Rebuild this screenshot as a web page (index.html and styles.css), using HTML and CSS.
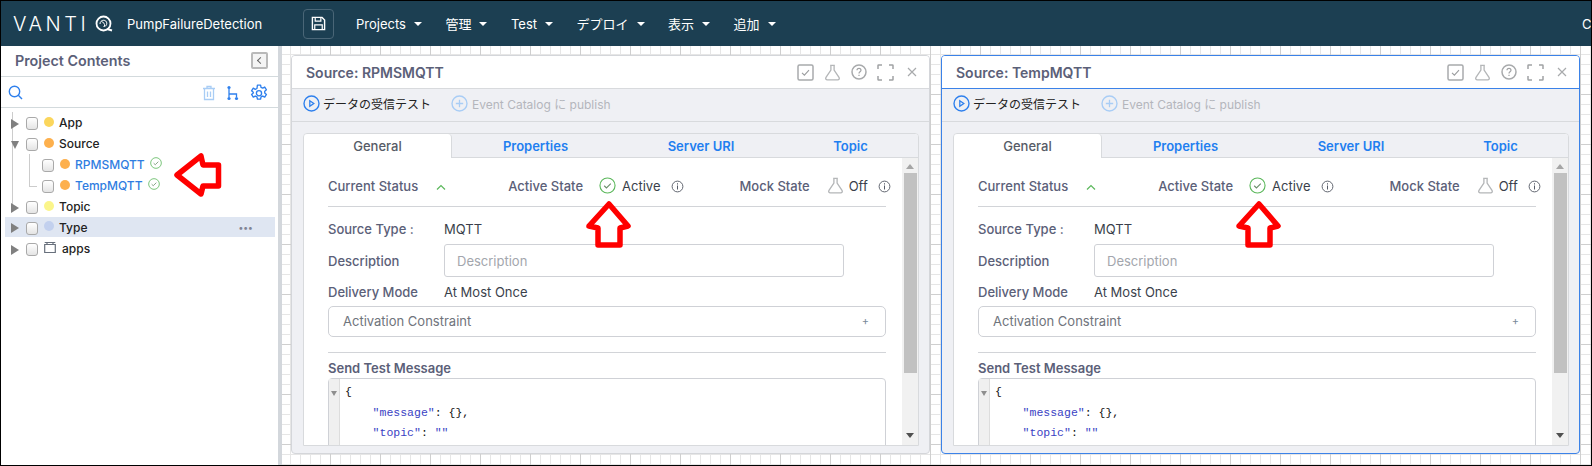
FILE: index.html
```html
<!DOCTYPE html>
<html lang="ja">
<head>
    <meta charset="UTF-8">
    <title>PumpFailureDetection</title>
    <link rel="stylesheet" href="styles.css">
</head>
<body>
<svg class="sprites" width="0" height="0">
    <symbol id="i-check" viewBox="0 0 18 18"><circle cx="9" cy="9" r="8" fill="none" stroke="#5cb85c" stroke-width="1.2"/><path d="M5.5 9.3l2.4 2.3 4.6-4.6" fill="none" stroke="#6c8f6c" stroke-width="1.2"/></symbol>
    <symbol id="i-info" viewBox="0 0 14 14"><circle cx="7" cy="7" r="5.8" fill="none" stroke="#555b66" stroke-width="1"/><path d="M7 6v4.2M7 3.6v1.2" stroke="#555b66" stroke-width="1.1"/></symbol>
    <symbol id="i-flask" viewBox="0 0 17 18"><path d="M6 1.5h5M6.8 1.5v5L1.6 14.2c-.8 1.3 0 2.6 1.4 2.6h11c1.4 0 2.2-1.3 1.4-2.6L10.2 6.5v-5" fill="none" stroke="#b4b6b8" stroke-width="1.4"/></symbol>
    <symbol id="i-play" viewBox="0 0 17 17"><circle cx="8.5" cy="8.5" r="7.5" fill="none" stroke="#2f80ed" stroke-width="1.4"/><path d="M6.8 5.8l4 2.7-4 2.7z" fill="none" stroke="#2f80ed" stroke-width="1.3"/></symbol>
    <symbol id="i-plus" viewBox="0 0 17 17"><circle cx="8.5" cy="8.5" r="7.5" fill="none" stroke="#a9cdf5" stroke-width="1.4"/><path d="M8.5 4.8v7.4M4.8 8.5h7.4" stroke="#a9cdf5" stroke-width="1.3"/></symbol>
    <symbol id="i-box" viewBox="0 0 17 17"><rect x="1" y="1" width="15" height="15" rx="1.5" fill="none" stroke="#a8aaac" stroke-width="1.5"/><path d="M5 8.8l2.4 2.4 4.6-5" fill="none" stroke="#9a9c9e" stroke-width="1.1"/></symbol>
    <symbol id="i-help" viewBox="0 0 16 16"><circle cx="8" cy="8" r="7" fill="none" stroke="#a8aaac" stroke-width="1.5"/><path d="M6 6.300c0-2.600 4-2.600 4 0 0 1.500-2 1.500-2 3.100M8 10.800v1.200" fill="none" stroke="#a0a2a4" stroke-width="1.2"/></symbol>
    <symbol id="i-full" viewBox="0 0 17 17"><path d="M1 5V1.600C1 1.200 1.200 1 1.600 1H5M12 1h3.400c.4 0 .6.2.6.6V5M16 12v3.400c0 .4-.2.6-.6.6H12M5 16H1.600c-.4 0-.6-.2-.6-.6V12" fill="none" stroke="#a0a2a4" stroke-width="1.5"/></symbol>
    <symbol id="i-close" viewBox="0 0 10 10"><path d="M1 1l8 8M9 1l-8 8" stroke="#a8aaac" stroke-width="1.2"/></symbol>
</svg>

<div class="app">
    <nav class="navbar">
        <div class="logo">VANTI<svg class="logo-q" viewBox="0 0 18 18" width="18" height="18"><circle cx="8.500" cy="8.500" r="7" fill="none" stroke="#fff" stroke-width="1.800"/><path d="M5 9c0-4 5-5 6.500-2 1 2.500-1 5-3 4.500M6.500 6.500c2 1 3.500 2 3 4.500" fill="none" stroke="#fff" stroke-width="1"/><path d="M12 14l5 1.500" stroke="#fff" stroke-width="2"/></svg></div>
        <div class="project-name">PumpFailureDetection</div>
        <button class="save-btn"><svg viewBox="0 0 16 16" width="15" height="15"><path d="M1.500 1.500h10.300l2.700 2.700v10.300h-13z" fill="none" stroke="#fff" stroke-width="1.500"/><path d="M4.500 1.500v4h6v-4M4 14.500v-5h8v5" fill="none" stroke="#fff" stroke-width="1.300"/></svg></button>
        <ul class="menu">
            <li class="caret">Projects</li>
            <li class="caret">管理</li>
            <li class="caret">Test</li>
            <li class="caret">デプロイ</li>
            <li class="caret">表示</li>
            <li class="caret">追加</li>
        </ul>
        <div class="nav-user">C</div>
    </nav>

    <div class="main">
        <aside class="sidebar">
            <div class="side-head">
                <span>Project Contents</span>
                <button class="collapse-btn"></button>
            </div>
            <div class="side-tools">
                <svg class="search-icon" viewBox="0 0 15 15" width="15" height="15"><circle cx="6.500" cy="6.500" r="5.200" fill="none" stroke="#2f80ed" stroke-width="1.400"/><path d="M10.300 10.300l3.700 3.700" stroke="#2f80ed" stroke-width="1.400"/></svg>
                <svg viewBox="0 0 14 16" width="14" height="16"><path d="M1 3.500h12M5 3.500V1.500h4v2M2.500 3.500v11h9v-11M5.500 6.500v5.500M8.500 6.500v5.500" fill="none" stroke="#a9cdf5" stroke-width="1.300"/></svg>
                <svg viewBox="0 0 14 16" width="14" height="16"><path d="M3 3.500v9M3 9h7.500v3" fill="none" stroke="#2f80ed" stroke-width="1.300"/><circle cx="3" cy="2.500" r="1.600" fill="#2f80ed"/><circle cx="3" cy="13.500" r="1.600" fill="#2f80ed"/><circle cx="10.500" cy="13.500" r="1.600" fill="#2f80ed"/></svg>
                <svg viewBox="0 0 16 16" width="18" height="18"><path d="M6.600 1h2.800l.4 2 1.500.7 1.800-1 1.500 2.400-1.500 1.300v1.600l1.500 1.300-1.500 2.400-1.800-1-1.500.7-.4 2H6.600l-.4-2-1.500-.7-1.800 1-1.500-2.400 1.500-1.300V7.400L1.400 6.100l1.500-2.400 1.800 1 1.500-.7z" fill="none" stroke="#2f80ed" stroke-width="1.200" stroke-linejoin="round"/><circle cx="8" cy="8.200" r="2.300" fill="none" stroke="#2f80ed" stroke-width="1.200"/></svg>
            </div>
            <div class="tree">
                <span class="tree-line"></span>
                <div class="row"><i class="tri"></i><i class="cb"></i><i class="dot dot-app"></i><span>App</span></div>
                <div class="row"><i class="tri tri-open"></i><i class="cb"></i><i class="dot dot-source"></i><span>Source</span></div>
                <div class="children">
                    <div class="row child"><i class="cb"></i><i class="dot dot-source"></i><a>RPMSMQTT</a><svg class="row-check"><use href="#i-check"/></svg></div>
                    <div class="row child"><i class="cb"></i><i class="dot dot-source"></i><a>TempMQTT</a><svg class="row-check"><use href="#i-check"/></svg></div>
                </div>
                <div class="row"><i class="tri"></i><i class="cb"></i><i class="dot dot-topic"></i><span>Topic</span></div>
                <div class="row row-on"><i class="tri"></i><i class="cb"></i><i class="dot dot-type"></i><span>Type</span><b class="more">•••</b></div>
                <div class="row"><i class="tri"></i><i class="cb"></i><svg class="cal" viewBox="0 0 12 11" width="12" height="11"><path d="M.7 2.500h10.600v8H.7zM.7.500h10.600" fill="none" stroke="#68707c" stroke-width="1.200"/><path d="M3 0v2.500M9 0v2.500" stroke="#68707c" stroke-width="1.200"/></svg><span>apps</span></div>
            </div>
        </aside>

        <section class="canvas">
            <div class="win win-one">
                <header class="win-head">
                    <h2>Source: RPMSMQTT</h2>
                    <div class="win-icons">
                        <svg class="w17"><use href="#i-box"/></svg>
                        <svg class="w17"><use href="#i-flask"/></svg>
                        <svg class="w16"><use href="#i-help"/></svg>
                        <svg class="w17"><use href="#i-full"/></svg>
                        <svg class="w10"><use href="#i-close"/></svg>
                    </div>
                </header>
                <div class="win-tools">
                    <svg class="w17"><use href="#i-play"/></svg><span class="tool-text">データの受信テスト</span>
                    <svg class="w17 tool-gap"><use href="#i-plus"/></svg><span class="tool-off">Event Catalog に publish</span>
                </div>
                <div class="win-body">
                    <div class="card">
                        <ul class="tabs">
                            <li class="tab-on">General</li>
                            <li>Properties</li>
                            <li>Server URI</li>
                            <li>Topic</li>
                        </ul>
                        <div class="pane">
                            <div class="pane-inner">
                                <div class="status">
                                    <span class="lbl">Current Status</span>
                                    <svg class="chev" viewBox="0 0 10 6" width="10" height="6"><path d="M1 5.500l4-4 4 4" fill="none" stroke="#5cb85c" stroke-width="1.200"/></svg>
                                    <span class="lbl st-active">Active State</span>
                                    <svg class="w17 st-check"><use href="#i-check"/></svg>
                                    <span class="st-val">Active</span>
                                    <svg class="w13 st-info"><use href="#i-info"/></svg>
                                    <span class="lbl st-mock">Mock State</span>
                                    <svg class="w17 st-flask"><use href="#i-flask"/></svg>
                                    <span class="st-val st-off">Off</span>
                                    <svg class="w13 st-info2"><use href="#i-info"/></svg>
                                </div>
                                <div class="form-row f-type"><span class="lbl">Source Type :</span><span>MQTT</span></div>
                                <div class="form-row f-desc"><span class="lbl">Description</span><div class="input">Description</div></div>
                                <div class="form-row f-mode"><span class="lbl">Delivery Mode</span><span>At Most Once</span></div>
                                <div class="constraint"><span>Activation Constraint</span><b>+</b></div>
                                <h3 class="send">Send Test Message</h3>
                                <div class="editor">
                                    <div class="gutter"><i></i></div>
                                    <div class="code">
                                        <div>{</div>
                                        <div class="indent"><em>"message"</em>: {},</div>
                                        <div class="indent"><em>"topic"</em>: <em>""</em></div>
                                        <div>}</div>
                                    </div>
                                </div>
                            </div>
                            <div class="scrollbar"><i class="sb-up"></i><i class="sb-thumb"></i><i class="sb-down"></i></div>
                        </div>
                    </div>
                </div>
            </div>

            <div class="win win-two win-focus">
                <header class="win-head">
                    <h2>Source: TempMQTT</h2>
                    <div class="win-icons">
                        <svg class="w17"><use href="#i-box"/></svg>
                        <svg class="w17"><use href="#i-flask"/></svg>
                        <svg class="w16"><use href="#i-help"/></svg>
                        <svg class="w17"><use href="#i-full"/></svg>
                        <svg class="w10"><use href="#i-close"/></svg>
                    </div>
                </header>
                <div class="win-tools">
                    <svg class="w17"><use href="#i-play"/></svg><span class="tool-text">データの受信テスト</span>
                    <svg class="w17 tool-gap"><use href="#i-plus"/></svg><span class="tool-off">Event Catalog に publish</span>
                </div>
                <div class="win-body">
                    <div class="card">
                        <ul class="tabs">
                            <li class="tab-on">General</li>
                            <li>Properties</li>
                            <li>Server URI</li>
                            <li>Topic</li>
                        </ul>
                        <div class="pane">
                            <div class="pane-inner">
                                <div class="status">
                                    <span class="lbl">Current Status</span>
                                    <svg class="chev" viewBox="0 0 10 6" width="10" height="6"><path d="M1 5.500l4-4 4 4" fill="none" stroke="#5cb85c" stroke-width="1.200"/></svg>
                                    <span class="lbl st-active">Active State</span>
                                    <svg class="w17 st-check"><use href="#i-check"/></svg>
                                    <span class="st-val">Active</span>
                                    <svg class="w13 st-info"><use href="#i-info"/></svg>
                                    <span class="lbl st-mock">Mock State</span>
                                    <svg class="w17 st-flask"><use href="#i-flask"/></svg>
                                    <span class="st-val st-off">Off</span>
                                    <svg class="w13 st-info2"><use href="#i-info"/></svg>
                                </div>
                                <div class="form-row f-type"><span class="lbl">Source Type :</span><span>MQTT</span></div>
                                <div class="form-row f-desc"><span class="lbl">Description</span><div class="input">Description</div></div>
                                <div class="form-row f-mode"><span class="lbl">Delivery Mode</span><span>At Most Once</span></div>
                                <div class="constraint"><span>Activation Constraint</span><b>+</b></div>
                                <h3 class="send">Send Test Message</h3>
                                <div class="editor">
                                    <div class="gutter"><i></i></div>
                                    <div class="code">
                                        <div>{</div>
                                        <div class="indent"><em>"message"</em>: {},</div>
                                        <div class="indent"><em>"topic"</em>: <em>""</em></div>
                                        <div>}</div>
                                    </div>
                                </div>
                            </div>
                            <div class="scrollbar"><i class="sb-up"></i><i class="sb-thumb"></i><i class="sb-down"></i></div>
                        </div>
                    </div>
                </div>
            </div>
        </section>
    </div>

    <!-- red arrows lying over the screenshot -->
    <svg class="arrow arrow-left" viewBox="0 0 50 46" width="50" height="46"><path d="M4 23L28 4l2 9h15.500v21H30l-2 8z" fill="#fff" stroke="#f00" stroke-width="5.500" stroke-linejoin="round"/></svg>
    <svg class="arrow arrow-up arrow-up-one" viewBox="0 0 48 50" width="48" height="50"><path d="M24 5l19 22-8 2v17H13V29l-9-2z" fill="#fff" stroke="#f00" stroke-width="5.500" stroke-linejoin="round"/></svg>
    <svg class="arrow arrow-up arrow-up-two" viewBox="0 0 48 50" width="48" height="50"><path d="M24 5l19 22-8 2v17H13V29l-9-2z" fill="#fff" stroke="#f00" stroke-width="5.500" stroke-linejoin="round"/></svg>
</div>
</body>
</html>
```

FILE: styles.css
```css
* {
    padding: 0;
    margin: 0;
    list-style: none;
    box-sizing: border-box;
}

body {
    font-family: Inter, "Noto Sans CJK JP", sans-serif;
    font-size: 13px;
    color: #3a3f4b;
    overflow: hidden;
    background: #fff;
}

.sprites {
    position: absolute;
}

.app {
    position: relative;
    width: 1592px;
    height: 466px;
    border: 1px solid #000;
    display: flex;
    flex-direction: column;
    overflow: hidden;
}

/* navbar */
.navbar {
    height: 45px;
    flex: none;
    background: #1c3f52;
    color: #fff;
    display: flex;
    align-items: center;
    padding-left: 12px;
    position: relative;
}

.logo {
    font-size: 20px;
    font-weight: 300;
    letter-spacing: 3.5px;
    width: 114px;
    display: flex;
    align-items: center;
}

.logo-q {
    margin-left: 6px;
}

.project-name {
    width: 176px;
    font-size: 13px;
}

.save-btn {
    width: 31px;
    height: 30px;
    background: transparent;
    border: 1px solid #4a6677;
    border-radius: 4px;
    display: flex;
    align-items: center;
    justify-content: center;
}

.menu {
    display: flex;
    gap: 23.5px;
    margin-left: 22px;
}

.caret {
    display: flex;
    align-items: center;
}

.caret::after {
    content: "";
    margin-left: 8px;
    border-top: 4px solid #fff;
    border-left: 4px solid transparent;
    border-right: 4px solid transparent;
}

.nav-user {
    position: absolute;
    left: 1581px;
    top: 15px;
}

/* sidebar */
.main {
    flex: 1;
    display: flex;
    min-height: 0;
}

.sidebar {
    width: 281px;
    flex: none;
    background: #fff;
    border-right: 4px solid #d3d7dc;
}

.side-head {
    height: 31px;
    border-bottom: 1px solid #d3dadd;
    display: flex;
    align-items: center;
    justify-content: space-between;
    padding: 0 10px 2px 14px;
    font-size: 14.3px;
    font-weight: 600;
    color: #5b6078;
}

.collapse-btn {
    width: 17px;
    height: 17px;
    background: #f4f4f4;
    border: 2px solid #b9b9b9;
    border-radius: 2px;
    position: relative;
}

.collapse-btn::after {
    content: "";
    position: absolute;
    left: 5px;
    top: 4px;
    width: 4px;
    height: 4px;
    border-left: 1px solid #666;
    border-bottom: 1px solid #666;
    transform: rotate(45deg);
}

.side-tools {
    height: 31px;
    border-bottom: 1px solid #d3dadd;
    display: flex;
    align-items: center;
    gap: 10px;
    padding: 1px 10px 0 7px;
}

.search-icon {
    margin-right: auto;
}

.tree {
    position: relative;
    padding-top: 4px;
}

.tree-line {
    position: absolute;
    left: 11px;
    top: 4px;
    height: 100px;
    border-left: 1px solid #ccc;
}

.row {
    position: relative;
    height: 21px;
    margin-left: 4px;
    width: 270px;
    padding-left: 6px;
    display: flex;
    align-items: center;
    font-size: 12px;
    font-weight: 500;
    color: #222;
}

.row i {
    flex: none;
}

.tri {
    width: 8px;
    height: 10px;
    margin-top: 2px;
    margin-right: 7px;
    border-left: 8px solid #808080;
    border-top: 5px solid transparent;
    border-bottom: 5px solid transparent;
}

.tri-open {
    border-left: 4px solid transparent;
    border-right: 4px solid transparent;
    border-top: 8px solid #808080;
    border-bottom: 0;
    height: 8px;
}

.cb {
    width: 12px;
    height: 13px;
    margin-top: 2px;
    margin-right: 6px;
    border: 1px solid #a9a9a9;
    border-radius: 3px;
    background: linear-gradient(#fff, #e4e4e4);
}

.dot {
    width: 10px;
    height: 10px;
    border-radius: 50%;
    margin-top: -2px;
    margin-right: 5px;
}

.dot-app { background: #fbd65c; }
.dot-source { background: #fdb04d; }
.dot-topic { background: #fbf58a; }
.dot-type { background: #c2d0ee; }

.children {
    position: relative;
}

.children::before {
    content: "";
    position: absolute;
    left: 28px;
    top: 0;
    width: 7px;
    height: 32px;
    border-left: 1px solid #ccc;
    border-bottom: 1px solid #ccc;
}

.child {
    padding-left: 37px;
}

.child a {
    color: #2f7de1;
}

.row-check {
    width: 12px;
    height: 12px;
    margin-left: 5px;
    margin-top: -3px;
}

.row-on {
    background: #dfe6f2;
    height: 20px;
    margin-bottom: 1px;
}

.more {
    margin-left: auto;
    margin-right: 22px;
    font-size: 9px;
    letter-spacing: .5px;
    color: #808494;
}

.cal {
    margin-top: -3px;
    margin-right: 6px;
}

/* canvas with grid */
.canvas {
    flex: 1;
    position: relative;
    background-color: #fff;
    background-image:
        linear-gradient(#cfcfcf 1px, transparent 1px),
        linear-gradient(90deg, #cfcfcf 1px, transparent 1px),
        linear-gradient(#e6e6e6 1px, transparent 1px),
        linear-gradient(90deg, #e6e6e6 1px, transparent 1px);
    background-size: 50px 50px, 50px 50px, 10px 10px, 10px 10px;
    background-position: 0 -2px, -2px 0, 0 -2px, -2px 0;
}

.win {
    position: absolute;
    top: 9px;
    width: 639px;
    height: 399px;
    background: #eff0f4;
    border: 1px solid #d4d6da;
    border-radius: 4px;
    overflow: hidden;
    display: flex;
    flex-direction: column;
}

.win-one {
    left: 9px;
}

.win-two {
    left: 659px;
}

.win-focus {
    border-color: #3b82e8;
}

.win-head {
    height: 33px;
    flex: none;
    background: #fff;
    border-bottom: 1px solid #d8dadd;
    display: flex;
    align-items: center;
    padding-left: 14px;
}

.win-focus .win-head {
    border-bottom-color: #3b82e8;
}

.win-head h2 {
    font-size: 14px;
    font-weight: 600;
    color: #5b6078;
}

.win-icons {
    margin-left: auto;
    margin-right: 12px;
    display: flex;
    align-items: center;
    gap: 10px;
}

.w17 { width: 17px; height: 17px; flex: none; }
.w16 { width: 16px; height: 16px; flex: none; }
.w13 { width: 13px; height: 13px; flex: none; }
.w10 { width: 10px; height: 10px; flex: none; margin-left: 3px; }

.win-tools {
    height: 33px;
    flex: none;
    border-bottom: 1px solid #d8dadd;
    display: flex;
    align-items: center;
    padding: 0 0 3px 11px;
    font-size: 12px;
}

.tool-text {
    margin-left: 3px;
    color: #222;
}

.tool-gap {
    margin-left: 20px;
}

.tool-off {
    margin-left: 4px;
    color: #b4b6bc;
}

.win-body {
    flex: 1;
    min-height: 0;
    padding: 11px 10px 7px 11px;
}

.card {
    height: 100%;
    background: #fff;
    border: 1px solid #d8dadd;
    border-radius: 4px 4px 0 0;
    display: flex;
    flex-direction: column;
    overflow: hidden;
}

.tabs {
    height: 24px;
    flex: none;
    display: grid;
    grid-template-columns: 148px 167px 164px 1fr;
    background: #eff0f4;
    border-bottom: 1px solid #d8dadd;
    font-size: 13px;
    font-weight: 600;
    color: #1f7ff0;
    text-align: center;
    line-height: 24px;
}

.tab-on {
    background: #fff;
    color: #565b66;
    font-weight: 500;
    border-radius: 4px 4px 0 0;
    border-right: 1px solid #d8dadd;
    height: 24px;
    margin-bottom: -1px;
}

.pane {
    flex: 1;
    min-height: 0;
    display: flex;
    overflow: hidden;
}

.pane-inner {
    width: 598px;
    flex: none;
    padding: 0 16px 0 24px;
}

.lbl {
    font-weight: 500;
    color: #5b6078;
}

.status {
    height: 49px;
    border-bottom: 1px solid #d2d4d8;
    display: flex;
    align-items: center;
    white-space: nowrap;
    padding-top: 7px;
}

.status > * {
    flex: none;
}

.chev {
    margin-left: 18px;
    margin-top: 3px;
}

.st-active { margin-left: 62px; }
.st-check { margin-left: 16px; }
.st-val { margin-left: 6px; }
.st-info { margin-left: 11px; margin-top: 1px; }
.st-mock { margin-left: 55px; }
.st-flask { margin-left: 17px; }
.st-off { margin-left: 5px; }
.st-info2 { margin-left: 10px; margin-top: 1px; }

.form-row {
    display: grid;
    grid-template-columns: 116px 1fr;
    align-items: center;
}

.f-type { height: 20px; margin-top: 12px; }
.f-desc { height: 33px; margin-top: 5px; }
.f-mode { height: 20px; margin-top: 5px; }

.input {
    width: 400px;
    height: 33px;
    border: 1px solid #cfd1d6;
    border-radius: 3px;
    padding-left: 12px;
    line-height: 33px;
    color: #a3a6ad;
}

.constraint {
    margin-top: 4px;
    height: 31px;
    border: 1px solid #cfd1d6;
    border-radius: 5px;
    display: flex;
    align-items: center;
    justify-content: space-between;
    padding: 0 16px 1px 14px;
    color: #6f747c;
}

.constraint b {
    font-weight: 400;
    font-size: 11px;
    color: #7a8a9a;
}

.send {
    margin-top: 15px;
    border-top: 1px solid #d2d4d8;
    padding-top: 7px;
    height: 26px;
    font-size: 13px;
    font-weight: 600;
    color: #5b6078;
}

.editor {
    height: 100px;
    border: 1px solid #cfd1d6;
    border-radius: 4px 4px 0 0;
    display: flex;
}

.gutter {
    width: 11px;
    flex: none;
    background: #f0f0f0;
    border-right: 1px solid #ddd;
    position: relative;
}

.gutter i {
    position: absolute;
    left: 2px;
    top: 12px;
    border-top: 5px solid #8f8f8f;
    border-left: 3px solid transparent;
    border-right: 3px solid transparent;
}

.code {
    font-family: "Liberation Mono", "DejaVu Sans Mono", monospace;
    font-size: 11.5px;
    line-height: 20.5px;
    color: #111;
    padding: 3px 0 0 5px;
}

.indent {
    padding-left: 27.6px;
}

.code em {
    font-style: normal;
    color: #3a3fc4;
}

.scrollbar {
    width: 16px;
    flex: none;
    background: #f1f1f1;
    display: flex;
    flex-direction: column;
    align-items: center;
    padding-top: 6px;
}

.sb-up {
    border-bottom: 5px solid #a5a5a5;
    border-left: 4px solid transparent;
    border-right: 4px solid transparent;
}

.sb-thumb {
    width: 13px;
    height: 200px;
    margin-top: 4px;
    background: #c1c1c1;
}

.sb-down {
    margin-top: 60px;
    border-top: 5px solid #505050;
    border-left: 4px solid transparent;
    border-right: 4px solid transparent;
}

/* arrows */
.arrow {
    position: absolute;
}

.arrow-left {
    left: 172px;
    top: 151px;
}

.arrow-up {
    top: 198px;
}

.arrow-up-one {
    left: 584px;
}

.arrow-up-two {
    left: 1234px;
}
```
